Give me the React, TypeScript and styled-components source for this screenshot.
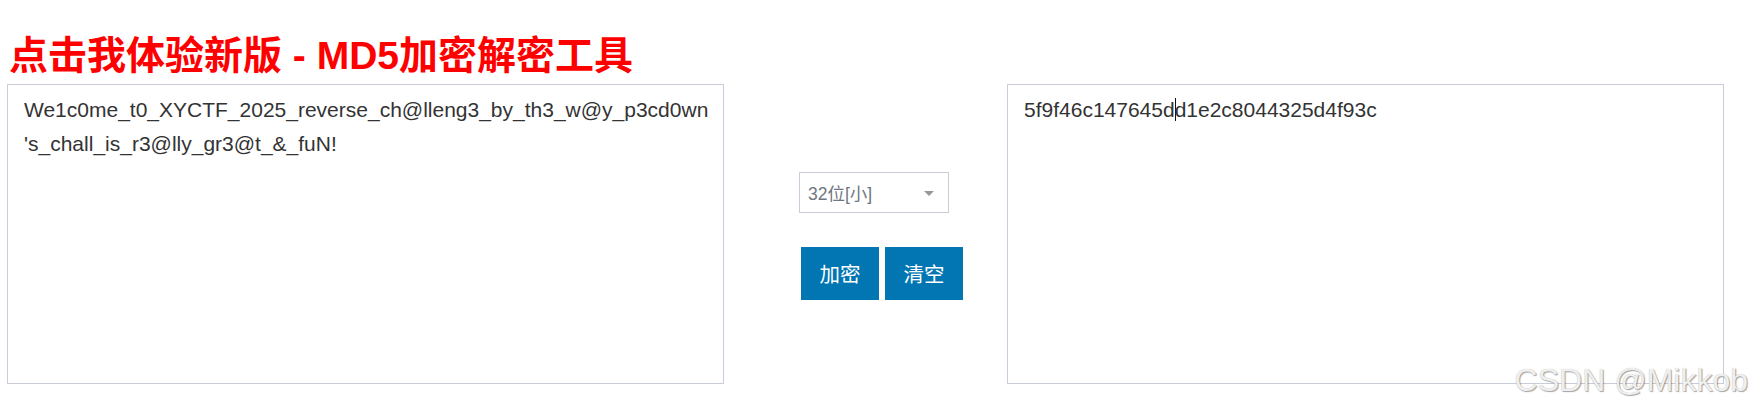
import React from "react";
import styled, { createGlobalStyle } from "styled-components";

const GlobalStyle = createGlobalStyle`
  html, body {
    margin: 0;
    padding: 0;
    background: #ffffff;
  }
  body {
    font-family: "Liberation Sans", Arial, "Noto Sans CJK SC", sans-serif;
    color: #333333;
  }
  * { box-sizing: border-box; }
`;

const Page = styled.div`
  position: relative;
  width: 1753px;
  min-height: 410px;
  padding: 36px 0 0 7px;
  overflow: hidden;
`;

const Title = styled.a`
  display: block;
  margin: 0 0 9px 2px;
  font-family: "Liberation Sans", Arial, "Noto Sans CJK SC", sans-serif;
  font-size: 39px;
  line-height: 39px;
  height: 39px;
  font-weight: 700;
  color: #ff0000;
  text-decoration: none;
  white-space: nowrap;
  cursor: pointer;
`;

const Row = styled.div`
  display: flex;
  align-items: flex-start;
`;

const TextPanel = styled.div`
  width: 717px;
  height: 300px;
  border: 1px solid #c8cdd9;
  background: #ffffff;
  padding: 8px 15px 0 16px;
  font-family: "Liberation Sans", Arial, "Noto Sans CJK SC", sans-serif;
  font-size: 21px;
  line-height: 34px;
  color: #333333;
  white-space: nowrap;
  overflow: hidden;
`;

const Middle = styled.div`
  width: 283px;
  padding: 88px 0 0 75px;
  display: flex;
  flex-direction: column;
  align-items: flex-start;
  gap: 34px;
`;

const SelectBox = styled.div`
  width: 150px;
  height: 41px;
  border: 1px solid #c8cdd9;
  background: #ffffff;
  display: flex;
  align-items: center;
  justify-content: space-between;
  padding: 0 14px 0 8px;
  font-family: "Liberation Sans", Arial, "Noto Sans CJK SC", sans-serif;
  font-size: 17.5px;
  color: #6f7680;
  cursor: pointer;
`;

const Arrow = styled.span`
  width: 0;
  height: 0;
  border-left: 5.5px solid transparent;
  border-right: 5.5px solid transparent;
  border-top: 5px solid #999999;
  margin-top: 2px;
`;

const ButtonRow = styled.div`
  display: flex;
  gap: 6px;
  margin-left: 2px;
`;

const ActionButton = styled.button`
  width: 78px;
  height: 53px;
  border: none;
  padding: 0;
  background: #0176b3;
  color: #ffffff;
  font-family: "Noto Sans CJK SC", "Liberation Sans", sans-serif;
  font-size: 20.5px;
  line-height: 53px;
  cursor: pointer;
`;

const Caret = styled.span`
  display: inline-block;
  width: 1.5px;
  height: 23px;
  margin-right: -1.5px;
  background: #111111;
  vertical-align: -4px;
`;

const Watermark = styled.div`
  position: absolute;
  top: 364px;
  right: 5px;
  font-family: "Liberation Sans", Arial, sans-serif;
  font-size: 32px;
  line-height: 32px;
  color: #efefef;
  text-shadow: 1px 1px 1px rgba(0, 0, 0, 0.35), 0 0 1px rgba(0, 0, 0, 0.25);
  pointer-events: none;
  white-space: nowrap;
`;

export default function App() {
  return (
    <>
      <GlobalStyle />
      <Page>
        <Title>点击我体验新版 - MD5加密解密工具</Title>
        <Row>
          <TextPanel>
            We1c0me_t0_XYCTF_2025_reverse_ch@lleng3_by_th3_w@y_p3cd0wn
            <br />
            's_chall_is_r3@lly_gr3@t_&amp;_fuN!
          </TextPanel>
          <Middle>
            <SelectBox>
              <span>32位[小]</span>
              <Arrow />
            </SelectBox>
            <ButtonRow>
              <ActionButton>加密</ActionButton>
              <ActionButton>清空</ActionButton>
            </ButtonRow>
          </Middle>
          <TextPanel>
            5f9f46c147645d
            <Caret />
            d1e2c8044325d4f93c
          </TextPanel>
        </Row>
        <Watermark>CSDN @Mikkob</Watermark>
      </Page>
    </>
  );
}
